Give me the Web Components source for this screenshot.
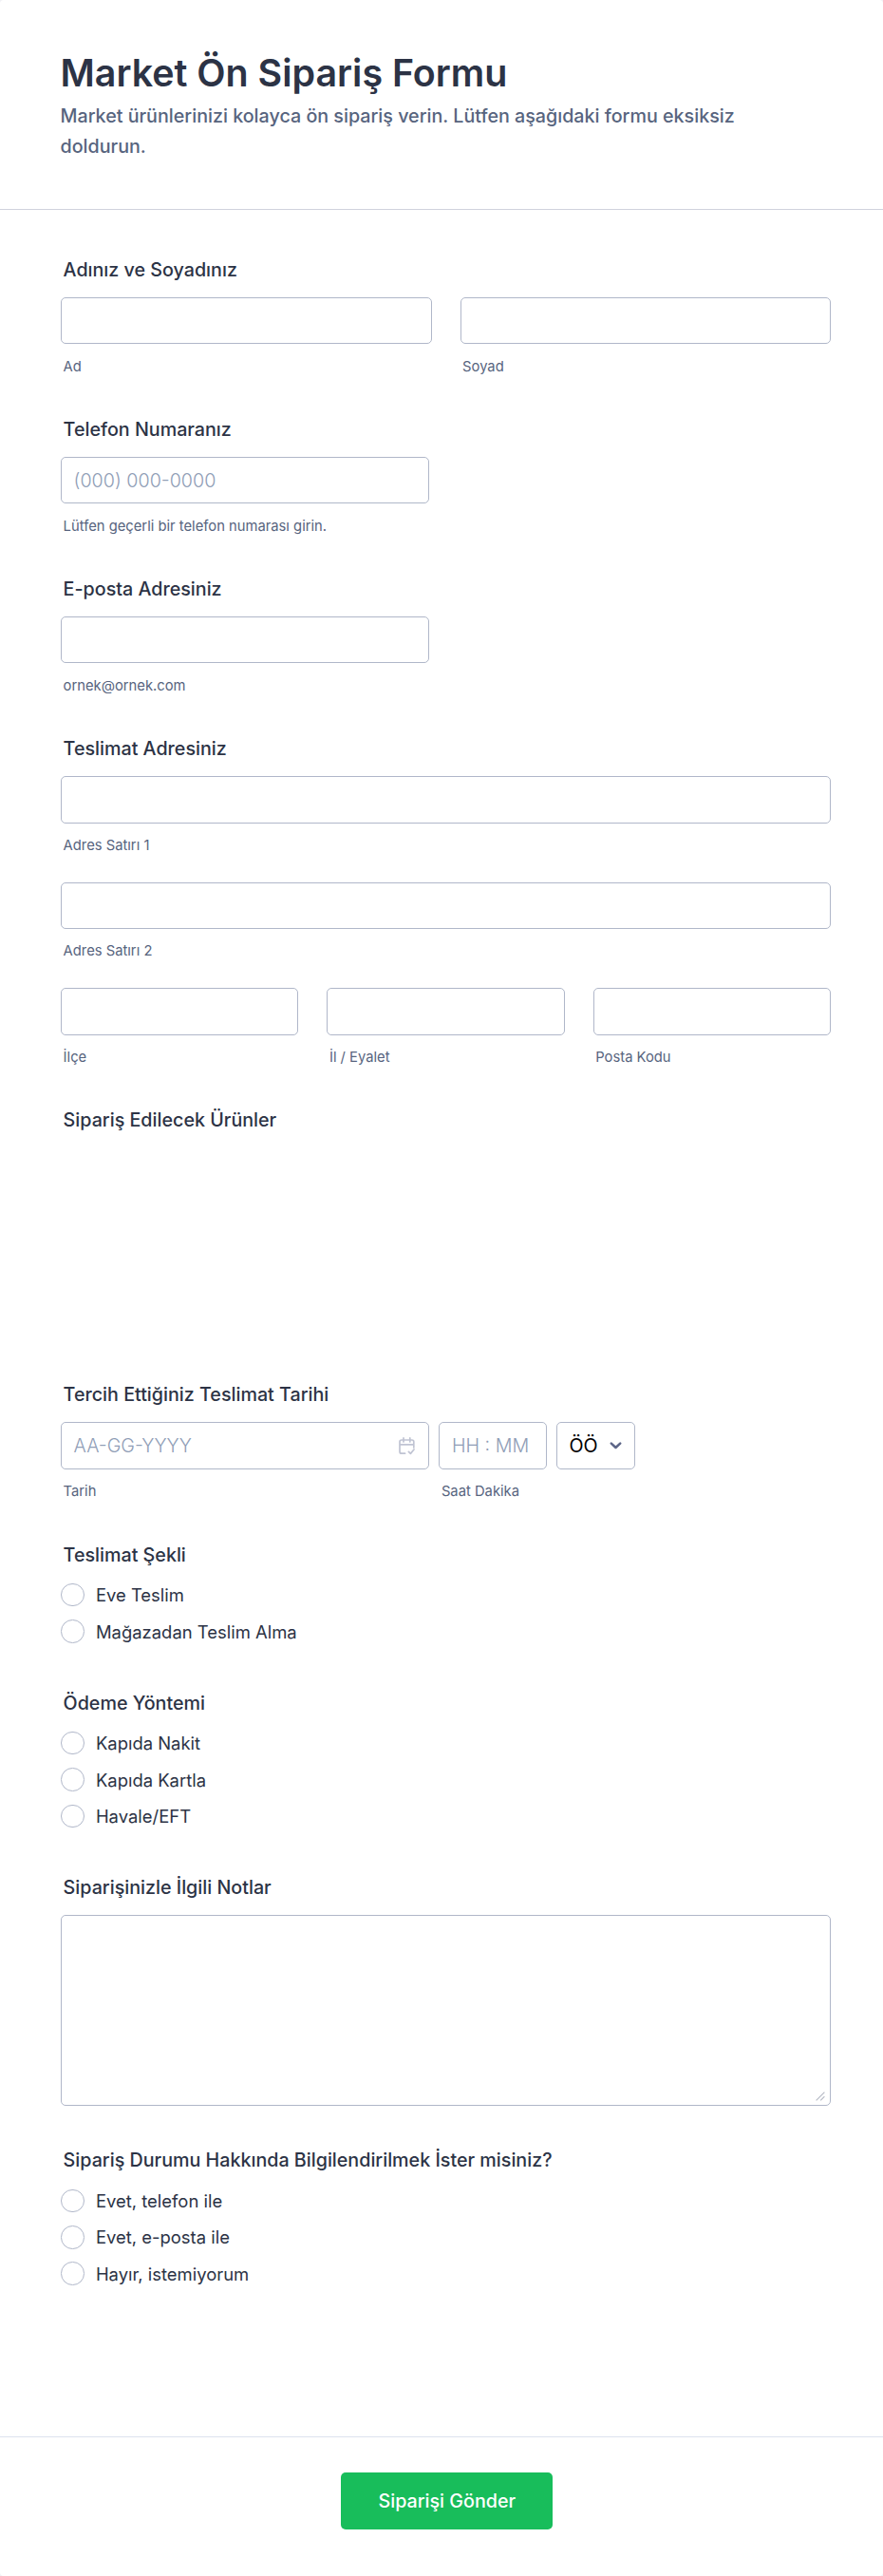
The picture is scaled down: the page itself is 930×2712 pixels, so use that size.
<!DOCTYPE html>
<html lang="tr">
<head>
<meta charset="utf-8">
<title>Market Ön Sipariş Formu</title>
<style>
    html {
        background: #f1f1f6;
    }
    body {
        margin: 0;
        font-family: Inter, "Noto Sans", sans-serif;
        --ink: #2c3345;
        --muted: #57647e;
        --line: #b0b7c9;
        --placeholder: #8f9db6;
    }
</style>
</head>
<body>
<order-form>
    <form-header slot="header">
        Market Ön Sipariş Formu
        <span slot="sub">Market ürünlerinizi kolayca ön sipariş verin. Lütfen aşağıdaki formu eksiksiz doldurun.</span>
    </form-header>

    <form-field label="Adınız ve Soyadınız">
        <field-row>
            <text-box hint="Ad"></text-box>
            <text-box hint="Soyad"></text-box>
        </field-row>
    </form-field>

    <form-field label="Telefon Numaranız">
        <text-box style="width:388px" hint="Lütfen geçerli bir telefon numarası girin.">(000) 000-0000</text-box>
    </form-field>

    <form-field label="E-posta Adresiniz">
        <text-box style="width:388px" hint="ornek@ornek.com"></text-box>
    </form-field>

    <form-field label="Teslimat Adresiniz">
        <text-box hint="Adres Satırı 1"></text-box>
        <text-box hint="Adres Satırı 2"></text-box>
        <field-row>
            <text-box hint="İlçe"></text-box>
            <text-box hint="İl / Eyalet"></text-box>
            <text-box hint="Posta Kodu"></text-box>
        </field-row>
    </form-field>

    <form-field label="Sipariş Edilecek Ürünler" style="height:243.4px"></form-field>

    <form-field label="Tercih Ettiğiniz Teslimat Tarihi">
        <field-row compact>
            <text-box style="flex:0 0 388px" hint="Tarih">AA-GG-YYYY<calendar-icon slot="icon"></calendar-icon></text-box>
            <text-box style="flex:0 0 113.3px" hint="Saat Dakika">HH : MM</text-box>
            <text-box style="flex:0 0 83.2px; --placeholder:#000; --weight:400">ÖÖ<chevron-icon slot="icon"></chevron-icon></text-box>
        </field-row>
    </form-field>

    <form-field label="Teslimat Şekli">
        <radio-group options="Eve Teslim|Mağazadan Teslim Alma"></radio-group>
    </form-field>

    <form-field label="Ödeme Yöntemi">
        <radio-group options="Kapıda Nakit|Kapıda Kartla|Havale/EFT"></radio-group>
    </form-field>

    <form-field label="Siparişinizle İlgili Notlar">
        <note-area></note-area>
    </form-field>

    <form-field label="Sipariş Durumu Hakkında Bilgilendirilmek İster misiniz?">
        <radio-group options="Evet, telefon ile|Evet, e-posta ile|Hayır, istemiyorum"></radio-group>
    </form-field>

    <submit-button slot="footer">Siparişi Gönder</submit-button>
</order-form>

<script>
class BaseElement extends HTMLElement
{
    constructor(){
        super();
        this.attachShadow({mode:"open"});
    }

    render(){
        let template = document.createElement("template");
        template.innerHTML = this.getStyles() + this.getTemplate();
        this.shadowRoot.replaceChildren(template.content.cloneNode(true));
    }

    connectedCallback(){
        this.render();
    }
}

class OrderForm extends BaseElement
{
    getTemplate(){
        return `
        <slot name="header"></slot>
        <main class="fields"><slot></slot></main>
        <footer class="footer"><slot name="footer"></slot></footer>
        `;
    }

    getStyles(){
        return `
        <style>
            :host {
                display: flex;
                flex-direction: column;
                box-sizing: border-box;
                height: 2712px;
                background: #fff;
                border-radius: 4px;
                overflow: hidden;
            }
            .fields {
                flex: 1;
                display: flex;
                flex-direction: column;
                gap: 45.62px;
                padding: 51px 55px 0 64px;
            }
            .footer {
                box-sizing: border-box;
                height: 147px;
                padding: 37px 55px 0 66.6px;
                border-top: 1px solid #dde2ee;
                display: flex;
                justify-content: center;
                align-items: flex-start;
            }
        </style>
        `;
    }
}

class FormHeader extends BaseElement
{
    getTemplate(){
        return `
        <h1><slot></slot></h1>
        <p><slot name="sub"></slot></p>
        `;
    }

    getStyles(){
        return `
        <style>
            :host {
                display: block;
                box-sizing: border-box;
                height: 221px;
                padding: 52.5px 100px 0 63.5px;
                border-bottom: 1px solid #d0d2dd;
            }
            h1 {
                margin: 0;
                font-size: 39.38px;
                font-weight: 600;
                line-height: 48px;
                color: var(--ink);
            }
            p {
                margin: 5.3px 0 0;
                font-size: 19.69px;
                font-weight: 500;
                line-height: 32px;
                color: var(--muted);
            }
        </style>
        `;
    }
}

class FormField extends BaseElement
{
    getTemplate(){
        return `
        <div class="label">${this.getAttribute("label")}</div>
        <div class="controls"><slot></slot></div>
        `;
    }

    getStyles(){
        return `
        <style>
            :host {
                display: block;
                box-sizing: border-box;
            }
            .label {
                margin: 0 0 17px 2.6px;
                font-size: 19.69px;
                font-weight: 500;
                line-height: 24px;
                color: var(--ink);
            }
            .controls {
                display: flex;
                flex-direction: column;
                gap: 29.97px;
            }
        </style>
        `;
    }
}

class FieldRow extends BaseElement
{
    getTemplate(){
        return `<slot></slot>`;
    }

    getStyles(){
        return `
        <style>
            :host {
                display: flex;
                gap: 30px;
            }
            :host([compact]) {
                gap: 10.3px;
            }
            ::slotted(*) {
                flex: 1;
            }
        </style>
        `;
    }
}

class TextBox extends BaseElement
{
    getTemplate(){
        return `
        <div class="box">
            <span><slot></slot></span>
            <slot name="icon"></slot>
        </div>
        <div class="hint">${this.getAttribute("hint") || ""}</div>
        `;
    }

    getStyles(){
        return `
        <style>
            :host {
                display: block;
            }
            .box {
                box-sizing: border-box;
                height: 49.23px;
                padding: 0 12.6px;
                border: 1px solid var(--line);
                border-radius: 5px;
                display: flex;
                align-items: center;
                justify-content: space-between;
                font-size: 19.69px;
                font-weight: var(--weight, 300);
                line-height: 24px;
                white-space: nowrap;
                color: var(--placeholder);
            }
            .hint {
                height: 18px;
                margin: 14.3px 0 0 2.6px;
                font-size: 14.77px;
                line-height: 18px;
                color: var(--muted);
            }
        </style>
        `;
    }
}

class CalendarIcon extends BaseElement
{
    getTemplate(){
        return `
        <svg width="17" height="19" viewBox="0 0 17 19" fill="none" stroke="#c0c4d3" stroke-width="1.7" stroke-linecap="round" stroke-linejoin="round">
            <path d="M6.6 17.2H3a2 2 0 0 1-2-2V5a2 2 0 0 1 2-2h10.8a2 2 0 0 1 2 2v6M1 7.9h14.8M5 .9v4M11.8 .9v4M10.4 15.4l2 2 3.6-4.4"/>
        </svg>
        `;
    }

    getStyles(){
        return `
        <style>
            :host {
                display: flex;
                margin-right: 1px;
            }
        </style>
        `;
    }
}

class ChevronIcon extends BaseElement
{
    getTemplate(){
        return `
        <svg width="13" height="8" viewBox="0 0 13 8" fill="none" stroke="#5d6688" stroke-width="2.5" stroke-linecap="round" stroke-linejoin="round">
            <path d="M1.8 1.6l4.7 4.4 4.7-4.4"/>
        </svg>
        `;
    }

    getStyles(){
        return `
        <style>
            :host {
                display: flex;
            }
        </style>
        `;
    }
}

class RadioGroup extends BaseElement
{
    getTemplate(){
        return this.getAttribute("options").split("|").map(option => `
        <label class="option">
            <span class="dot"></span>
            <span>${option}</span>
        </label>
        `).join("");
    }

    getStyles(){
        return `
        <style>
            :host {
                display: flex;
                flex-direction: column;
                gap: 13.8px;
                padding: 1.3px 0 5.1px;
            }
            .option {
                display: flex;
                align-items: center;
                gap: 12.3px;
                height: 24.6px;
                font-size: 18.46px;
                line-height: 24px;
                color: var(--ink);
            }
            .dot {
                box-sizing: border-box;
                width: 24.6px;
                height: 24.6px;
                border: 1px solid var(--line);
                border-radius: 50%;
            }
        </style>
        `;
    }
}

class NoteArea extends BaseElement
{
    getTemplate(){
        return `
        <svg width="10" height="10" viewBox="0 0 10 10" stroke="#b3b7c3" stroke-width="1.1">
            <path d="M.6 9.4l8.8-8.8M5.2 9.4l4.2-4.2"/>
        </svg>
        `;
    }

    getStyles(){
        return `
        <style>
            :host {
                box-sizing: border-box;
                height: 200.7px;
                padding: 4px 5px;
                border: 1px solid var(--line);
                border-radius: 5px;
                display: flex;
                justify-content: flex-end;
                align-items: flex-end;
            }
        </style>
        `;
    }
}

class SubmitButton extends BaseElement
{
    getTemplate(){
        return `<button type="button"><slot></slot></button>`;
    }

    getStyles(){
        return `
        <style>
            :host {
                display: block;
            }
            button {
                width: 223px;
                height: 59.5px;
                padding: 0;
                border: 0;
                border-radius: 5px;
                background: #18bd5b;
                color: #fff;
                font: 500 19.69px/24px Inter, "Noto Sans", sans-serif;
            }
        </style>
        `;
    }
}

customElements.define('order-form',OrderForm);
customElements.define('form-header',FormHeader);
customElements.define('form-field',FormField);
customElements.define('field-row',FieldRow);
customElements.define('text-box',TextBox);
customElements.define('calendar-icon',CalendarIcon);
customElements.define('chevron-icon',ChevronIcon);
customElements.define('radio-group',RadioGroup);
customElements.define('note-area',NoteArea);
customElements.define('submit-button',SubmitButton);
</script>
</body>
</html>
